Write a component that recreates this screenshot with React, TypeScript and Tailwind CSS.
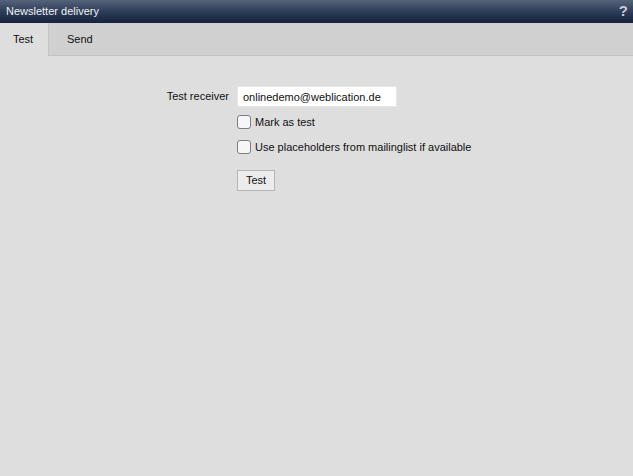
export default function App() {
  return (
    <div className="w-[633px] h-[476px] bg-[#dedede] flex flex-col text-[11px] text-[#111] font-['Liberation_Sans',Arial,sans-serif]">
      <div className="h-[23px] shrink-0 flex items-center justify-between pl-[6px] pr-[5px] bg-gradient-to-b from-[#56647a] via-[#2e3d58] to-[#15233c] text-[#f0f2f5]">
        <span>Newsletter delivery</span>
        <span className="text-[15px] font-bold text-[#c8ccd4]">?</span>
      </div>
      <div className="h-[33px] shrink-0 flex bg-[#d0d0d0] border-b border-[#c2c2c2]">
        <div className="w-[49px] flex items-center pl-[13px] bg-[#dedede] border-r border-[#c4c4c4] -mb-px">Test</div>
        <div className="flex items-center pl-[18px]">Send</div>
      </div>
      <div className="pt-[30px] flex gap-[8px]">
        <div className="w-[229px] text-right leading-[21px]">Test receiver</div>
        <div className="flex flex-col">
          <input
            readOnly
            value="onlinedemo@weblication.de"
            className="w-[160px] h-[21px] px-[5px] bg-white border border-[#e6e6e6] outline-none text-[11px] text-[#111]"
          />
          <label className="flex items-center gap-[4px] mt-[8px] h-[14px]">
            <span className="w-[14px] h-[14px] rounded-[3px] border border-[#7d7d7d] bg-[#f6f6f6]" />
            Mark as test
          </label>
          <label className="flex items-center gap-[4px] mt-[11px] h-[14px]">
            <span className="w-[14px] h-[14px] rounded-[3px] border border-[#7d7d7d] bg-[#f6f6f6]" />
            Use placeholders from mailinglist if available
          </label>
          <button className="mt-[16px] w-[38px] h-[21px] border border-[#b5b5b5] bg-[#ececec] text-[11px] text-[#111]">
            Test
          </button>
        </div>
      </div>
    </div>
  );
}
